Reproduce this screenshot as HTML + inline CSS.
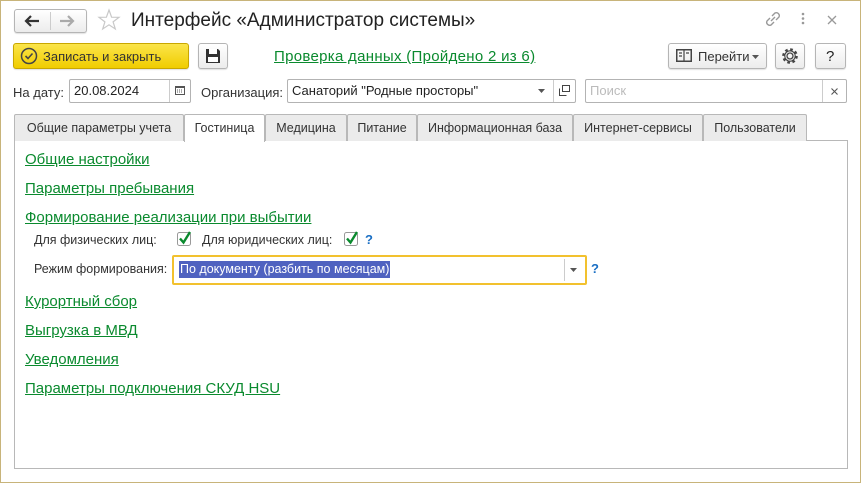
<!DOCTYPE html>
<html><head><meta charset="utf-8"><style>
*{box-sizing:border-box;margin:0;padding:0}
body{width:861px;height:483px;background:#fff;font-family:"Liberation Sans",sans-serif;font-size:13px;color:#333;position:relative;overflow:hidden}
.a{position:absolute}
.frame{left:0;top:0;width:861px;height:483px;border:1px solid #c8b47a}
.btn{position:absolute;border:1px solid #b5b5b5;border-radius:3px;background:linear-gradient(#fff,#ececec);box-shadow:0 1px 1px rgba(0,0,0,.12)}
.inp{position:absolute;border:1px solid #b3b3b3;border-radius:2px;background:#fff;height:24px;line-height:22px;padding-left:4px;color:#222}
.lnk{position:absolute;color:#0a8a2e;text-decoration:underline;font-size:15px;left:25px}
.tab{position:absolute;top:114px;height:27px;border:1px solid #b8b8b8;border-bottom:none;background:#ebebeb;line-height:26px;text-align:center;color:#333;border-radius:2px 2px 0 0;font-size:12.5px}
.q{position:absolute;color:#1a6fc4;font-weight:bold}
svg{position:absolute}
</style></head><body>
<div class="a frame"></div>
<div class="btn" style="left:14px;top:9px;width:73px;height:24px"></div>
<div class="a" style="left:50px;top:12px;width:1px;height:18px;background:#ccc"></div>
<svg style="left:24px;top:14px" width="16" height="14"><path d="M2 7H15M7 2L2 7L7 12" stroke="#333" stroke-width="2.2" fill="none"/></svg>
<svg style="left:59px;top:14px" width="16" height="14"><path d="M1 7H14M9 2L14 7L9 12" stroke="#aaa" stroke-width="2.2" fill="none"/></svg>
<svg style="left:97px;top:8px" width="24" height="24"><path d="M12 2L14.6 9.2L22 9.3L16.1 13.9L18.3 21L12 16.8L5.7 21L7.9 13.9L2 9.3L9.4 9.2Z" stroke="#c8c8c8" stroke-width="1.2" fill="none"/></svg>
<div class="a" style="left:131px;top:10px;font-size:19px;color:#222">Интерфейс «Администратор системы»</div>
<svg style="left:764px;top:10px" width="18" height="18"><path d="M8 6L11 3a3 3 0 0 1 4 4L12 10M10 12L7 15a3 3 0 0 1-4-4L6 8M7 11L11 7" stroke="#999" stroke-width="1.4" fill="none"/></svg>
<svg style="left:800px;top:12px" width="6" height="14"><circle cx="3" cy="2" r="1.3" fill="#999"/><circle cx="3" cy="6.5" r="1.3" fill="#999"/><circle cx="3" cy="11" r="1.3" fill="#999"/></svg>
<svg style="left:827px;top:15px" width="10" height="10"><path d="M1 1L9 9M9 1L1 9" stroke="#999" stroke-width="1.3"/></svg>

<div class="btn" style="left:13px;top:43px;width:176px;height:26px;background:linear-gradient(#fbe54a,#f0cd00);border-color:#c9a700"></div>
<svg style="left:20px;top:47px" width="18" height="18"><circle cx="9" cy="9" r="7.5" stroke="#444" stroke-width="1.5" fill="none"/><path d="M5.5 9L8 11.5L12.5 6.5" stroke="#444" stroke-width="1.6" fill="none"/></svg>
<div class="a" style="left:43px;top:49px;font-size:13px;color:#333">Записать и закрыть</div>
<div class="btn" style="left:198px;top:43px;width:30px;height:26px"></div>
<svg style="left:205px;top:48px" width="16" height="16"><path d="M1 1H13L15 3V15H1Z" fill="#333"/><rect x="4" y="1" width="8" height="5" fill="#fff"/><rect x="3" y="9" width="10" height="5" fill="#fff"/></svg>
<div class="a" style="left:274px;top:48px;font-size:15px;color:#0a8a2e;text-decoration:underline;letter-spacing:0.3px">Проверка данных (Пройдено 2 из 6)</div>
<div class="btn" style="left:668px;top:43px;width:99px;height:26px"></div>
<svg style="left:676px;top:49px" width="16" height="13"><rect x="0.75" y="0.75" width="14.5" height="11.5" stroke="#444" stroke-width="1.5" fill="none"/><path d="M8 1V12M3 4H6M3 7H6M10 4H13" stroke="#444" stroke-width="1.2"/></svg>
<div class="a" style="left:698px;top:49px;color:#333">Перейти</div>
<svg style="left:752px;top:55px" width="7" height="4"><path d="M0 0H7L3.5 4Z" fill="#555"/></svg>
<div class="btn" style="left:775px;top:43px;width:30px;height:26px"></div>
<svg style="left:781px;top:47px" width="18" height="18"><circle cx="9" cy="9" r="3" stroke="#444" stroke-width="1.3" fill="none"/><circle cx="9" cy="9" r="6.5" stroke="#444" stroke-width="2.6" stroke-dasharray="2.6 2.5" fill="none"/><circle cx="9" cy="9" r="5.2" stroke="#444" stroke-width="1.1" fill="none"/></svg>
<div class="btn" style="left:815px;top:43px;width:31px;height:26px"></div>
<div class="a" style="left:826px;top:48px;font-size:15px;color:#222">?</div>

<div class="a" style="left:13px;top:85px">На дату:</div>
<div class="inp" style="left:69px;top:79px;width:122px">20.08.2024</div>
<div class="a" style="left:169px;top:80px;width:1px;height:22px;background:#ccc"></div>
<svg style="left:175px;top:86px" width="10" height="9"><rect x="0.5" y="0.5" width="9" height="8" stroke="#555" fill="none"/><rect x="0" y="0" width="10" height="2" fill="#555"/><path d="M2 4H8M2 6H8" stroke="#555" stroke-dasharray="1 1"/></svg>
<div class="a" style="left:201px;top:85px">Организация:</div>
<div class="inp" style="left:287px;top:79px;width:289px">Санаторий "Родные просторы"</div>
<div class="a" style="left:553px;top:80px;width:1px;height:22px;background:#ccc"></div>
<svg style="left:538px;top:89px" width="7" height="4"><path d="M0 0H7L3.5 4Z" fill="#555"/></svg>
<svg style="left:559px;top:85px" width="11" height="11"><rect x="3.5" y="0.5" width="7" height="6" stroke="#444" fill="none"/><path d="M0.5 3.5V10.5H7.5" stroke="#444" fill="none"/></svg>
<div class="inp" style="left:585px;top:79px;width:262px;color:#bbb">Поиск</div>
<div class="a" style="left:822px;top:80px;width:1px;height:22px;background:#ccc"></div>
<svg style="left:831px;top:88px" width="7" height="7"><path d="M0.5 0.5L6.5 6.5M6.5 0.5L0.5 6.5" stroke="#555" stroke-width="1.1"/></svg>

<div class="a" style="left:14px;top:140px;width:834px;height:329px;border:1px solid #b8b8b8"></div>
<div class="tab" style="left:14px;width:170px">Общие параметры учета</div>
<div class="tab" style="left:184px;width:81px;background:#fff;height:28px;z-index:2">Гостиница</div>
<div class="tab" style="left:265px;width:82px">Медицина</div>
<div class="tab" style="left:347px;width:70px">Питание</div>
<div class="tab" style="left:417px;width:156px">Информационная база</div>
<div class="tab" style="left:573px;width:130px">Интернет-сервисы</div>
<div class="tab" style="left:703px;width:104px">Пользователи</div>

<div class="lnk" style="top:151px">Общие настройки</div>
<div class="lnk" style="top:180px">Параметры пребывания</div>
<div class="lnk" style="top:209px">Формирование реализации при выбытии</div>
<div class="a" style="left:34px;top:233px;font-size:12.5px">Для физических лиц:</div>
<svg style="left:176px;top:230px" width="18" height="17"><rect x="1.5" y="2.5" width="13" height="13" rx="2" stroke="#999" fill="#fff"/><path d="M4 8.5L7.5 12.5L14 2" stroke="#0a8a2e" stroke-width="2.4" fill="none"/></svg>
<div class="a" style="left:202px;top:233px;font-size:12.5px">Для юридических лиц:</div>
<svg style="left:343px;top:230px" width="18" height="17"><rect x="1.5" y="2.5" width="13" height="13" rx="2" stroke="#999" fill="#fff"/><path d="M4 8.5L7.5 12.5L14 2" stroke="#0a8a2e" stroke-width="2.4" fill="none"/></svg>
<div class="q" style="left:365px;top:232px">?</div>
<div class="a" style="left:34px;top:262px;font-size:12.5px">Режим формирования:</div>
<div class="a" style="left:172px;top:255px;width:415px;height:30px;border:2px solid #f2c12e;border-radius:2px"></div>
<div class="a" style="left:179px;top:261px;height:17px;line-height:17px;background:#4f62c0;color:#fff;padding:0 1px;font-size:12.5px">По документу (разбить по месяцам)</div>
<div class="a" style="left:564px;top:259px;width:1px;height:22px;background:#ccc"></div>
<svg style="left:570px;top:268px" width="7" height="4"><path d="M0 0H7L3.5 4Z" fill="#555"/></svg>
<div class="q" style="left:591px;top:261px">?</div>
<div class="lnk" style="top:293px">Курортный сбор</div>
<div class="lnk" style="top:322px">Выгрузка в МВД</div>
<div class="lnk" style="top:351px">Уведомления</div>
<div class="lnk" style="top:380px">Параметры подключения СКУД HSU</div>
</body></html>
